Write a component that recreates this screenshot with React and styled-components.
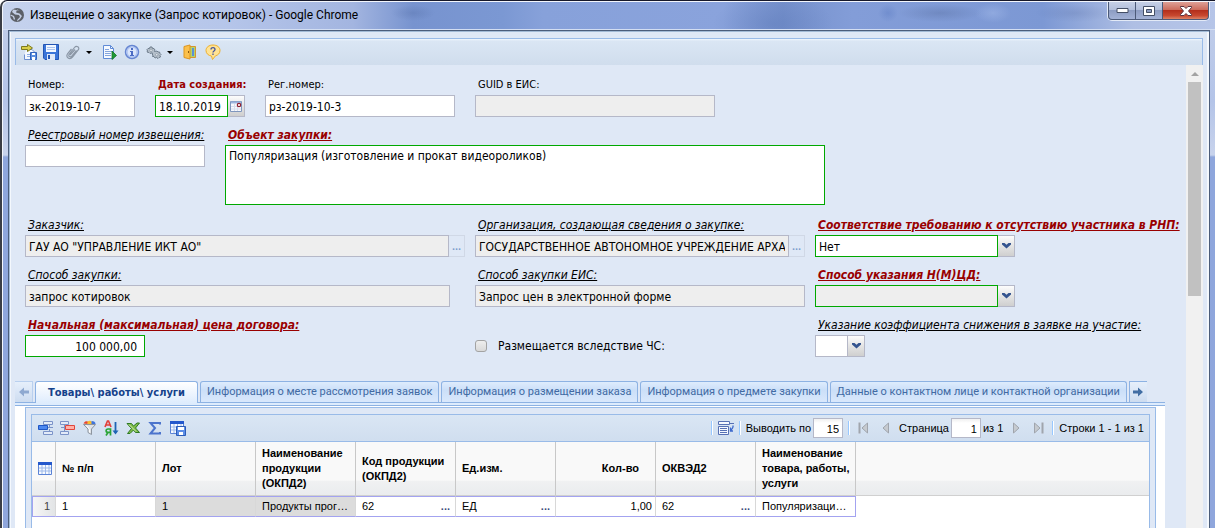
import React from 'react';
import styled, { createGlobalStyle, css } from 'styled-components';

const verdana = `'DejaVu Sans Condensed', Verdana, sans-serif`;
const arial = `'Liberation Sans', Arial, sans-serif`;
const segoe = `Roboto, 'Segoe UI', sans-serif`;

const tabs = [
  { id: 1, name: 'Товары\\ работы\\ услуги', active: true },
  { id: 2, name: 'Информация о месте рассмотрения заявок' },
  { id: 3, name: 'Информация о размещении заказа' },
  { id: 4, name: 'Информация о предмете закупки' },
  { id: 5, name: 'Данные о контактном лице и контактной организации' },
];

const columns = [
  { id: 'num', title: '№ п/п', value: '1' },
  { id: 'lot', title: 'Лот', value: '1', locked: true },
  {
    id: 'name',
    title: 'Наименование продукции (ОКПД2)',
    value: 'Продукты прог…',
    locked: true,
  },
  { id: 'code', title: 'Код продукции (ОКПД2)', value: '62', lookup: true },
  { id: 'unit', title: 'Ед.изм.', value: 'ЕД', lookup: true },
  { id: 'count', title: 'Кол-во', value: '1,00', right: true },
  { id: 'okved', title: 'ОКВЭД2', value: '62', lookup: true },
  {
    id: 'goods',
    title: 'Наименование товара, работы, услуги',
    value: 'Популяризаци…',
  },
];

/* ---------- icons ---------- */

const Svg = ({ w = 16, h = 16, children }) => (
  <svg width={w} height={h} viewBox={`0 0 ${w} ${h}`} fill='none' aria-hidden='true'>
    {children}
  </svg>
);

const GlobeIcon = () => (
  <Svg>
    <circle cx='8' cy='8' r='7' fill='#5c6067' />
    <path d='M4 2.500 3 5l3 2.500 4 .5 1 2-2.500 2.500-.5 2 3-2.500 2-3-2.500-2.500L7 5.500l1-3 3 1' fill='#c3cde2' />
    <path d='m1.500 8 3 1.500 1 3' stroke='#c3cde2' strokeWidth='1.300' />
  </Svg>
);

const SaveExitIcon = () => (
  <Svg>
    <path d='M5 5.500h6l3 3v7H3.500v-5' fill='#f4f8ff' stroke='#6b8fd0' />
    <path d='M6 12.500h3M6 10.500h3' stroke='#8fb0e6' />
    <path d='M9.500 8.500h6v7h-6z' fill='#5b8fe0' stroke='#2f62bd' />
    <path d='M11 9h3v2h-3zM11 13h3v3h-3z' fill='#fff' />
    <path d='M.5 2.500h6V.500l5 3.500-5 3.500v-2h-6z' fill='#d9cf4a' stroke='#7d7a1d' />
  </Svg>
);

const DiskIcon = () => (
  <Svg>
    <path d='M.5.500h15v15H2l-1.500-1.500z' fill='#3a74d8' stroke='#2355b4' />
    <path d='M3 1h10v7H3z' fill='#f2f7ff' />
    <path d='M4 3.500h8M4 5.500h8' stroke='#a9c4f0' />
    <path d='M4 10h8v6H4z' fill='#dfe8f8' />
    <path d='M5 11h2v4H5z' fill='#2355b4' />
  </Svg>
);

const ClipIcon = () => (
  <Svg>
    <path
      d='M5 11l5-5.500M11.500 6.500l-4.500 5.500c-1.800 2-4.300.2-2.700-1.800L9.500 3.500c2-2.600 5.700-.2 3.700 2.500L7.500 13c-2.800 3.300-7.300.3-4.800-3.500L6.500 5'
      stroke='#8b97a6'
      strokeWidth='1.200'
    />
  </Svg>
);

const DocPlayIcon = () => (
  <Svg>
    <path d='M1.500 1.500h7l3 3v10h-10z' fill='#f5f9ff' stroke='#5f8ad6' />
    <path d='M8.500 1.500v3h3' stroke='#5f8ad6' />
    <path d='M3 5.500h4M3 7.500h7M3 9.500h6M3 11.500h6' stroke='#84a5dd' />
    <path d='m10 7 4.500 4.500L10 15.500z' fill='#1f9a34' stroke='#117526' strokeWidth='.8' />
  </Svg>
);

const InfoIcon = () => (
  <Svg>
    <circle cx='8' cy='8' r='6.500' fill='#dbe6fb' stroke='#6686d2' strokeWidth='1.500' />
    <circle cx='8' cy='8' r='5' stroke='#a4bcf0' />
    <path d='M7 4h2v2H7zM6 7h3v4h1v1H6v-1h1V8H6z' fill='#4c6cc4' />
  </Svg>
);

const GearIcon = () => (
  <Svg>
    <path
      d='m1 5.500 1-1h1.500L4 3h2l.5 1.500H8L9 6l-.5 1.500h1L11 7l1 1h1.500l.5 1.500 1 1-1 1 .5 1.500-1.500.5-1 1-1.500-1-1.500.500-1-1.500H6.500L7 11 6 10l.5-1L5 9l-1 .500L3 8.500 1 8l.5-1z'
      fill='#b4bfca'
      stroke='#6e7d8c'
    />
    <circle cx='5' cy='6.300' r='1.200' fill='#f4f8fd' stroke='#6e7d8c' strokeWidth='.6' />
    <circle cx='10.800' cy='10.800' r='1.200' fill='#f4f8fd' stroke='#6e7d8c' strokeWidth='.6' />
  </Svg>
);

const DoorIcon = () => (
  <Svg>
    <path d='M6.500 2.500h6v11h-6z' fill='#b4d36b' stroke='#d59530' />
    <path d='M10 4v8' stroke='#5b91d8' strokeWidth='2' />
    <path d='m1 2.500 6-1.500v14l-6-1.500z' fill='#fbc04c' stroke='#dd951f' />
    <path d='M5.500 7v2' stroke='#8a5a10' />
  </Svg>
);

const HelpIcon = () => (
  <Svg>
    <path
      d='M8 1c4 0 7 2.200 7 5.500 0 2.800-2 4.700-4.500 5.300L7.500 15.500l-1-3.500C3.500 11.700 1 9.500 1 6.500 1 3.200 4 1 8 1z'
      fill='#ffe394'
      stroke='#eeb02c'
    />
    <path d='M6 5.500c0-2.500 4-2.500 4 0C10 7 8 7 8 8.500M8 9.500V11' stroke='#45549c' strokeWidth='1.300' />
  </Svg>
);

const CalendarIcon = () => (
  <Svg w={13} h={13}>
    <path d='M.5 1.500h11v10H.5z' fill='#f7f9fd' stroke='#7f96bd' />
    <path d='M1 2.500h10' stroke='#9bb4dd' strokeWidth='2' />
    <path d='M4.500 4v7M7.500 4v7M1 6.500h10M1 9h10' stroke='#d6deec' />
    <circle cx='9' cy='5' r='1.700' fill='#fff' stroke='#902030' strokeWidth='1.200' />
  </Svg>
);

const ChevronIcon = () => (
  <Svg w={9} h={6}>
    <path d='M0 0h2.500l2 1.700L6.500 0H9v1.500L4.500 5.500 0 1.500z' fill='#34548f' />
  </Svg>
);

const ScrollArrowIcon = ({ left }) => (
  <Svg w={10} h={10}>
    <path
      d={left ? 'M0 5 5 .500V3.500h5v3H5v3z' : 'm10 5-5-4.500V3.500H0v3h5v3z'}
      fill={left ? '#8fa9d0' : '#416da3'}
    />
  </Svg>
);

const RowInsertIcon = () => (
  <Svg>
    <path d='M5.500 1.500h9v3h-9zM5.500 11.500h9v3h-9z' fill='#e3ebf8' stroke='#7b93c8' />
    <path d='M11.500 5v2M11.500 9v3' stroke='#7b93c8' />
    <path d='M.5 5.500h9v4h-9z' fill='#4b87f0' stroke='#1f56c4' />
    <path d='M10 7.500h5' stroke='#7b93c8' />
  </Svg>
);

const RowRemoveIcon = () => (
  <Svg>
    <path d='M.5 1.500h8v3h-8zM.5 11.500h8v3h-8z' fill='#e3ebf8' stroke='#7b93c8' />
    <path d='M4.500 5v6M1 7.500h4' stroke='#7b93c8' />
    <path d='M5.500 5.500h9v4h-9z' fill='#ffb0a8' stroke='#e0463c' />
  </Svg>
);

const FilterIcon = () => (
  <Svg>
    <path d='M1.500 4.500h12L9.500 9v5.500L6 12.500V9z' fill='#dfe3e8' stroke='#8d959f' />
    <path d='M1.500 3.500c1.500-3 4-2.500 5-1.500L5.500 4z' fill='#e8482f' />
    <path d='M5.500 1.500c3-1.500 4.500-.500 4.500 2.500H5.500z' fill='#f7bd2e' />
    <path d='M9.500 1c2.500 0 4 1 4 3h-4z' fill='#3f74dc' />
    <path d='m4.500 5.500 3 4v3' stroke='#fff' />
  </Svg>
);

const SortIcon = () => (
  <Svg>
    <path d='m1 7 2.500-6h1L7 7M2 5h4' stroke='#e2403a' strokeWidth='1.700' />
    <path d='M6.500 15.500V9H4C1.500 9 1.500 12.300 4 12.300h2.500M4 12.500l-2 3' stroke='#2ba437' strokeWidth='1.700' />
    <path d='M11.500 2v11' stroke='#2064b4' strokeWidth='1.800' />
    <path d='M8.500 10.500h6l-3 4z' fill='#2064b4' />
  </Svg>
);

const ExcelIcon = () => (
  <Svg>
    <path
      d='M1 3.500h4.500l2 2.500L11 3h2.500L9.500 8l4 4.500h-4l-2-2.500L4 13.500H1.500L5.500 8.500z'
      fill='#7fbb48'
      stroke='#2f7a24'
    />
    <path d='m3 4.500 7 7' stroke='#d3ecb4' />
  </Svg>
);

const SigmaIcon = () => (
  <Svg>
    <path d='M12 4.500V3H2.500L7 8l-4.500 5.500H12V12' stroke='#4c74cc' strokeWidth='2' />
  </Svg>
);

const TableIcon = ({ disk }) => (
  <Svg>
    <path d='M.5 1.500h13v12H.5z' fill='#f7faff' stroke='#5b83d6' />
    <path d='M0 1h14v3H0z' fill='#2458cc' />
    <path d='M4 4v9M7.500 4v9M11 4v9M1 7h12M1 10h12' stroke='#9db9ea' />
    {disk && (
      <>
        <path d='M6.500 6.500h9v9h-9z' fill='#5c8de6' stroke='#2c5cb8' />
        <path d='M8 7h6v3H8zM9 12h4v3H9z' fill='#fff' />
      </>
    )}
  </Svg>
);

const RowsIcon = () => (
  <Svg>
    <path d='M.5 1.500h11v3H.5zM.5 6.500h10v8H.5z' fill='#f4f8ff' stroke='#5670b4' />
    <path d='M12 3.500h4M2 8.500h7M2 10.500h7M2 12.500h7' stroke='#5670b4' />
    <path d='M15 5.500c.500 3-1 3.500-2.500 5m0-3v3.500H15' stroke='#3c68cc' strokeWidth='1.300' />
  </Svg>
);

const PagerIcon = ({ end, next }) => (
  <Svg w={12} h={12}>
    <g transform={next ? 'translate(12 0) scale(-1 1)' : undefined}>
      {end && <path d='M1.500.500v11' stroke='#a0a5ad' strokeWidth='2' />}
      <path d='M9.500 1v10L4 6z' fill='#c6cacf' stroke='#a0a5ad' />
    </g>
  </Svg>
);

/* ---------- styles ---------- */

const GlobalStyle = createGlobalStyle`
  * {
    box-sizing: border-box;
  }
  body {
    margin: 0;
    font-family: ${verdana};
    font-size: 11px;
    color: #000;
    overflow: hidden;
  }
  button, input, select, textarea {
    font: inherit;
    color: inherit;
    margin: 0;
    border-radius: 0;
    outline: none;
  }
  svg {
    display: block;
    flex: none;
  }
`;

const Window = styled.div`
  height: 100vh;
  display: flex;
  flex-direction: column;
  padding-right: 5px;
  border-top: 1px solid #16182a;
  border-left: 2px solid #3a3d45;
  border-top-left-radius: 7px;
  background: linear-gradient(
    #c3cfea 0,
    #b4c4e8 100px,
    #c8d3ec 154px,
    #8ea6dc 156px,
    #8fa6dc 100%
  );
  box-shadow: inset 1px 1px 0 #f3f6fc;
`;

const TitleBar = styled.header`
  flex: none;
  height: 28px;
  margin: 1px -5px 0 1px;
  padding: 0 5px 0 6px;
  display: flex;
  align-items: flex-start;
  gap: 5px;
  border-bottom: 1px solid #d3def2;
  border-top-left-radius: 6px;
  background:
    radial-gradient(22px 8px at 410px 11px, rgba(70, 95, 150, 0.25), transparent),
    radial-gradient(60px 30px at 770px 22px, rgba(85, 115, 180, 0.35), transparent),
    radial-gradient(10px 9px at 885px 11px, rgba(65, 100, 180, 0.25), transparent),
    radial-gradient(42px 9px at 937px 11px, rgba(65, 85, 130, 0.25), transparent),
    radial-gradient(18px 10px at 990px 11px, rgba(185, 205, 245, 0.3), transparent),
    radial-gradient(40px 9px at 1072px 11px, rgba(75, 95, 150, 0.2), transparent),
    linear-gradient(
      90deg,
      #c5d2ed 0,
      #b6c6ea 220px,
      #a3b5e0 350px,
      #7793cf 410px,
      #7b98d3 500px,
      #87a1da 540px,
      #8aa3dc 720px,
      #7691cc 780px,
      #839dd8 850px,
      #7c98d4 1040px,
      #afbfe4 1130px,
      #b6c5e8 100%
    );
`;

const Title = styled.h1`
  flex: 1;
  margin: 0;
  font: 12px/26px ${segoe};
  white-space: nowrap;
`;

const TitleIcon = styled.span`
  padding-top: 5px;
`;

const WindowButtons = styled.div`
  display: flex;
  border: 1px solid #e3eaf7;
  border-top: 0;
  border-radius: 0 0 5px 5px;
`;

const WindowButton = styled.button`
  width: ${({ $close }) => ($close ? '46px' : '27px')};
  height: 18px;
  padding: 0;
  display: flex;
  align-items: center;
  justify-content: center;
  border: 1px solid #4c5a78;
  border-top: 0;
  border-left-width: 0;
  background: ${({ $close }) =>
    $close
      ? 'linear-gradient(#dea096 0, #cd6d5d 45%, #b42f1c 50%, #c8482f 80%, #dd8367)'
      : 'linear-gradient(#c6d0e6 0, #b3bfdb 45%, #8d9dc3 50%, #a3b2d6)'};
  &:first-child {
    width: 28px;
    border-left-width: 1px;
    border-bottom-left-radius: 4px;
  }
  &:last-child {
    border-bottom-right-radius: 4px;
  }
`;

const Frame = styled.main`
  flex: 1;
  min-height: 0;
  margin-left: 6px;
  padding: 7px 6px 0;
  display: flex;
  flex-direction: column;
  border: 1px solid #4b5d7b;
  border-bottom: 0;
  background: #dfe8f6;
  box-shadow: inset 1px 1px 0 #a3bbd6, inset -2px 0 0 #f4f8fd, inset 2px 0 0 #f4f8fd;
`;

const Toolbar = styled.div`
  flex: none;
  height: 27px;
  padding: 0 5px;
  display: flex;
  align-items: center;
  gap: 6px;
  border: 1px solid #99bbe8;
  border-bottom: 0;
  background: linear-gradient(#f2f7fd 0, #dae6f4 2px, #d0dded);
`;

const ToolButton = styled.button`
  padding: 0;
  display: flex;
  align-items: center;
  gap: 5px;
  border: 0;
  background: none;
`;

const Caret = styled.span`
  margin-right: 4px;
  border: 3px solid transparent;
  border-top-color: #000;
  border-bottom: 0;
`;

const Scroller = styled.div`
  flex: 1;
  min-height: 0;
  display: flex;
`;

const Content = styled.div`
  flex: 1;
  min-width: 0;
  display: flex;
  flex-direction: column;
`;

const ScrollBar = styled.div`
  flex: none;
  width: 17px;
  padding: 7px 2px 0;
  display: flex;
  flex-direction: column;
  align-items: center;
  gap: 6px;
  background: #f1f1f1;
  &::before {
    content: '';
    border: 4px solid transparent;
    border-top: 0;
    border-bottom-color: #a3a3a3;
  }
  &::after {
    content: '';
    width: 13px;
    height: 214px;
    background: #c1c1c1;
  }
`;

const Form = styled.form`
  flex: none;
  padding: 10px 10px 16px;
`;

const Row = styled.div`
  display: flex;
  align-items: flex-start;
  gap: 20px;
  margin-bottom: ${({ $gap }) => $gap || 8}px;
`;

const GridRow = styled.div`
  display: grid;
  grid-template-columns: 440px 330px 1fr;
  column-gap: 10px;
  margin-bottom: 8px;
`;

const FieldBox = styled.div`
  width: ${({ $w }) => ($w ? `${$w}px` : 'auto')};
`;

const Label = styled.label`
  display: block;
  padding: 1px 0 1px 3px;
  font: 12px/18px ${verdana};
  white-space: nowrap;
  ${({ $plain }) =>
    $plain
      ? css`
          font-size: 11px;
        `
      : css`
          font-style: italic;
          text-decoration: underline;
        `}
  ${({ $required }) =>
    $required &&
    css`
      color: #990000;
      font-weight: bold;
    `}
`;

const control = css`
  display: block;
  width: 100%;
  min-width: 0;
  height: 22px;
  padding: 2px 3px 0;
  border: 1px solid ${({ $required }) => ($required ? '#00a800' : '#b5b8c8')};
  background: ${({ $disabled }) => ($disabled ? '#eeeeee' : '#fff')};
  font: 12px ${verdana};
`;

const Input = styled.input`
  ${control}
  text-align: ${({ $right }) => ($right ? 'right' : 'left')};
  padding-right: ${({ $right }) => ($right ? 7 : 3)}px;
`;

const Area = styled.textarea`
  ${control}
  height: 60px;
  padding-top: 3px;
  resize: none;
`;

const Select = styled.select`
  ${control}
  appearance: none;
`;

const Combo = styled.div`
  display: flex;
  width: ${({ $w }) => ($w ? `${$w}px` : 'auto')};
`;

const Trigger = styled.button`
  flex: none;
  width: 17px;
  height: 22px;
  padding: 0;
  display: flex;
  align-items: center;
  justify-content: center;
  border: 1px solid #b5b8c8;
  border-left: 0;
  background: linear-gradient(#fdfdfd, #e4e4e4 50%, #cfcfcf);
`;

const MoreButton = styled.button`
  flex: none;
  width: 16px;
  height: 22px;
  padding: 0;
  border: 1px solid #d0d8e6;
  border-left: 0;
  background: #dfe8f6;
  color: #7f9fce;
  font: bold 11px ${arial};
`;

const CheckLine = styled.label`
  display: flex;
  align-items: center;
  gap: 11px;
  padding-top: 20px;
  font: 12px/20px ${verdana};
`;

const Check = styled.input`
  appearance: none;
  width: 12px;
  height: 12px;
  border: 1px solid #a3a3a3;
  border-radius: 3px;
  background: linear-gradient(#eeeeee, #d9d9d9);
`;

const TabStrip = styled.div`
  flex: none;
  display: flex;
  width: calc(100% - 21px);
  height: 25px;
  gap: 2px;
  border-bottom: 1px solid #8db2e3;
  box-shadow: inset 0 -2px 0 #deecfd, inset 0 -3px 0 #8db2e3;
`;

const Tab = styled.button`
  flex: none;
  height: ${({ $active }) => ($active ? 22 : 21)}px;
  min-width: 163px;
  padding: 0 6px;
  border: 1px solid #8db2e3;
  border-bottom: 0;
  border-radius: 3px 3px 0 0;
  font: ${({ $active }) => ($active ? `bold 11px/20px ${verdana}` : `11px/20px ${segoe}`)};
  color: ${({ $active }) => ($active ? '#15428b' : '#416aa3')};
  background: ${({ $active }) =>
    $active ? 'linear-gradient(#fff, #deecfd)' : 'linear-gradient(#deecfd, #cbdff8 40%, #d9e8fc)'};
  white-space: nowrap;
`;

const TabScroll = styled.button`
  flex: none;
  width: 18px;
  height: 21px;
  padding: 0;
  display: flex;
  align-items: center;
  justify-content: center;
  border: 1px solid ${({ $left }) => ($left ? '#b9d0ef' : '#8db2e3')};
  border-bottom: 0;
  border-${({ $left }) => ($left ? 'left' : 'right')}: 0;
  background: linear-gradient(#e6effb, #cddcf0);
`;

const TabBody = styled.div`
  flex: 1;
  min-height: 0;
  margin-right: 21px;
  padding: 1px 9px 0 10px;
  display: flex;
  background: #fff;
`;

const GridPanel = styled.section`
  flex: 1;
  min-width: 0;
  padding: 6px 5px 0;
  display: flex;
  border: 1px solid #99bbe8;
  border-bottom: 0;
  background: #dfe8f6;
`;

const Grid = styled.div`
  flex: 1;
  min-width: 0;
  border: 1px solid #99bbe8;
  border-bottom: 0;
  background: #fff;
`;

const GridToolbar = styled.div`
  height: 27px;
  padding: 0 5px 0 6px;
  display: flex;
  align-items: center;
  justify-content: space-between;
  border-bottom: 1px solid #99bbe8;
  background: linear-gradient(#dae6f4, #d0deef);
`;

const Tools = styled.div`
  display: flex;
  align-items: center;
  gap: 6px;
`;

const Pager = styled.div`
  display: flex;
  align-items: center;
  gap: ${({ $gap }) => $gap || 2}px;
  font: 11px ${arial};
  white-space: nowrap;
`;

const PagerNav = styled.div`
  display: flex;
  align-items: center;
  gap: 9px;
  padding: 0 3px;
`;

const Separator = styled.span`
  width: 2px;
  height: 14px;
  border-left: 1px solid #98c8ff;
  border-right: 1px solid #fff;
`;

const PageInput = styled.input`
  width: 30px;
  height: 20px;
  padding: 2px 3px 0;
  border: 1px solid #b5b8c8;
  background: linear-gradient(#f0f0f0, #fff 4px);
  font: 11px ${arial};
  text-align: right;
`;

const Table = styled.table`
  width: 100%;
  table-layout: fixed;
  border-collapse: separate;
  border-spacing: 0;
  font: 11px/15px ${arial};
`;

const Th = styled.th`
  height: 54px;
  padding: 0 4px 0 6px;
  width: ${({ $w }) => $w || 'auto'};
  border-bottom: 1px solid #d0d0d0;
  border-right: ${({ $last }) => ($last ? 0 : '1px solid #c8c8c8')};
  background: linear-gradient(#f9f9f9 0, #f9f9f9 72%, #f0f1f2 74%, #eaecee);
  font-weight: bold;
  text-align: ${({ $right }) => ($right ? 'right' : 'left')};
  padding-right: ${({ $right }) => ($right ? 16 : 4)}px;
`;

const Td = styled.td`
  height: 21px;
  padding: 0 6px;
  padding-right: ${({ $right }) => ($right ? 3 : 5)}px;
  border: 0 solid #a3a3f0;
  border-width: ${({ $last }) => ($last ? '0' : '1px 0')};
  border-right: ${({ $last }) => ($last ? 0 : '1px solid #d8d8d8')};
  background: ${({ $locked }) => ($locked ? '#dcdcdc' : '#fff')};
  white-space: nowrap;
  text-align: ${({ $right }) => ($right ? 'right' : 'left')};
  &:first-child {
    border-left: 1px solid #a3a3f0;
    background: linear-gradient(90deg, #f6f6f6, #e2e4e6);
    text-align: right;
    color: #444;
  }
  &:nth-last-child(2) {
    border-right-color: #a3a3f0;
  }
`;

const LookupCell = styled.span`
  display: flex;
  justify-content: space-between;
  b {
    color: #3c4f7c;
  }
`;

/* ---------- parts ---------- */

const Field = ({ id, label, w, plain, required, children, ...rest }) => (
  <FieldBox $w={w}>
    <Label htmlFor={id} $plain={plain} $required={required}>
      {label}
    </Label>
    {children || <Input id={id} $required={required} {...rest} />}
  </FieldBox>
);

const Lookup = ({ id, w, value }) => (
  <Combo $w={w}>
    <Input id={id} defaultValue={value} $disabled readOnly />
    <MoreButton type='button' aria-label='Выбрать'>
      ...
    </MoreButton>
  </Combo>
);

const DropDown = ({ id, w, value, ...rest }) => (
  <Combo $w={w}>
    <Select id={id} defaultValue={value} {...rest}>
      <option>{value}</option>
    </Select>
    <Trigger type='button' aria-label='Открыть список'>
      <ChevronIcon />
    </Trigger>
  </Combo>
);

function TitleRow() {
  return (
    <TitleBar>
      <TitleIcon>
        <GlobeIcon />
      </TitleIcon>
      <Title>Извещение о закупке (Запрос котировок) - Google Chrome</Title>
      <WindowButtons>
        <WindowButton aria-label='Свернуть'>
          <Svg w={13} h={6}>
            <path d='M1 .500h11v4H1z' fill='#fff' stroke='#444f66' />
          </Svg>
        </WindowButton>
        <WindowButton aria-label='Развернуть'>
          <Svg w={12} h={10}>
            <path d='M.5.500h11v9H.5z' fill='#fff' stroke='#444f66' />
            <path d='M3.500 3.500h5v3h-5z' fill='#8d9dc3' stroke='#444f66' />
          </Svg>
        </WindowButton>
        <WindowButton $close aria-label='Закрыть'>
          <Svg w={12} h={10}>
            <path
              d='M.5.500h3.500L6 2.500 8 .500h3.500v1L8.500 5l3 3.500v1H8l-2-2-2 2H.5v-1l3-3.500-3-3.500z'
              fill='#fff'
              stroke='#5a3440'
            />
          </Svg>
        </WindowButton>
      </WindowButtons>
    </TitleBar>
  );
}

function MainToolbar() {
  return (
    <Toolbar>
      <ToolButton aria-label='Сохранить и закрыть'>
        <SaveExitIcon />
      </ToolButton>
      <ToolButton aria-label='Сохранить'>
        <DiskIcon />
      </ToolButton>
      <ToolButton aria-label='Вложения'>
        <ClipIcon />
        <Caret />
      </ToolButton>
      <ToolButton aria-label='Выполнить'>
        <DocPlayIcon />
      </ToolButton>
      <ToolButton aria-label='Информация'>
        <InfoIcon />
      </ToolButton>
      <ToolButton aria-label='Настройки'>
        <GearIcon />
        <Caret />
      </ToolButton>
      <ToolButton aria-label='Выход'>
        <DoorIcon />
      </ToolButton>
      <ToolButton aria-label='Справка'>
        <HelpIcon />
      </ToolButton>
    </Toolbar>
  );
}

function NoticeForm() {
  return (
    <Form>
      <Row>
        <Field id='number' label='Номер:' w={110} plain defaultValue='зк-2019-10-7' />
        <Field id='created' label='Дата создания:' w={90} plain required>
          <Combo>
            <Input id='created' defaultValue='18.10.2019' $required />
            <Trigger type='button' aria-label='Календарь'>
              <CalendarIcon />
            </Trigger>
          </Combo>
        </Field>
        <Field id='regnum' label='Рег.номер:' w={190} plain defaultValue='рз-2019-10-3' />
        <Field id='guid' label='GUID в ЕИС:' w={240} plain $disabled readOnly />
      </Row>
      <Row $gap={10}>
        <Field id='registry' label='Реестровый номер извещения:' w={180} />
        <Field id='subject' label='Объект закупки:' w={600} required>
          <Area
            id='subject'
            $required
            defaultValue='Популяризация (изготовление и прокат видеороликов)'
          />
        </Field>
      </Row>
      <GridRow>
        <Field id='customer' label='Заказчик:'>
          <Lookup id='customer' w={440} value='ГАУ АО "УПРАВЛЕНИЕ ИКТ АО"' />
        </Field>
        <Field id='org' label='Организация, создающая сведения о закупке:'>
          <Lookup
            id='org'
            value='ГОСУДАРСТВЕННОЕ АВТОНОМНОЕ УЧРЕЖДЕНИЕ АРХАНГЕЛЬСКОЙ ОБЛАСТИ'
          />
        </Field>
        <Field id='rnp' label='Соответствие требованию к отсутствию участника в РНП:' required>
          <DropDown id='rnp' w={200} value='Нет' $required />
        </Field>
      </GridRow>
      <GridRow>
        <Field
          id='method'
          label='Способ закупки:'
          w={425}
          defaultValue='запрос котировок'
          $disabled
          readOnly
        />
        <Field
          id='methodEis'
          label='Способ закупки ЕИС:'
          defaultValue='Запрос цен в электронной форме'
          $disabled
          readOnly
        />
        <Field id='priceMethod' label='Способ указания Н(М)ЦД:' required>
          <DropDown id='priceMethod' w={200} value='' $required $disabled />
        </Field>
      </GridRow>
      <GridRow>
        <Field id='price' label='Начальная (максимальная) цена договора:' w={120} required>
          <Input id='price' defaultValue='100 000,00' $required $right />
        </Field>
        <CheckLine>
          <Check type='checkbox' />
          Размещается вследствие ЧС:
        </CheckLine>
        <Field id='ratio' label='Указание коэффициента снижения в заявке на участие:'>
          <DropDown id='ratio' w={50} value='' />
        </Field>
      </GridRow>
    </Form>
  );
}

function ItemsGrid() {
  return (
    <Grid>
      <GridToolbar>
        <Tools>
          <ToolButton aria-label='Добавить строку'>
            <RowInsertIcon />
          </ToolButton>
          <ToolButton aria-label='Удалить строку'>
            <RowRemoveIcon />
          </ToolButton>
          <ToolButton aria-label='Фильтр'>
            <FilterIcon />
          </ToolButton>
          <ToolButton aria-label='Сортировка'>
            <SortIcon />
          </ToolButton>
          <ToolButton aria-label='Экспорт в Excel'>
            <ExcelIcon />
          </ToolButton>
          <ToolButton aria-label='Итоги'>
            <SigmaIcon />
          </ToolButton>
          <ToolButton aria-label='Сохранить вид'>
            <TableIcon disk />
          </ToolButton>
        </Tools>
        <Pager $gap={5}>
          <Separator />
          <ToolButton aria-label='Строки на странице'>
            <RowsIcon />
          </ToolButton>
          <Separator />
          <Pager as='label'>
            Выводить по
            <PageInput defaultValue='15' />
          </Pager>
          <Separator />
          <PagerNav>
            <ToolButton aria-label='Первая'>
              <PagerIcon end />
            </ToolButton>
            <ToolButton aria-label='Предыдущая'>
              <PagerIcon />
            </ToolButton>
          </PagerNav>
          <Pager as='label'>
            Страница
            <PageInput defaultValue='1' />
            из 1
          </Pager>
          <PagerNav>
            <ToolButton aria-label='Следующая'>
              <PagerIcon next />
            </ToolButton>
            <ToolButton aria-label='Последняя'>
              <PagerIcon end next />
            </ToolButton>
          </PagerNav>
          <Separator />
          <span>Строки 1 - 1 из 1</span>
        </Pager>
      </GridToolbar>
      <Table>
        <thead>
          <tr>
            <Th $w='24px' aria-label='Столбцы'>
              <TableIcon />
            </Th>
            {columns.map((col) => (
              <Th key={col.id} $w='100px' $right={col.right}>
                {col.title}
              </Th>
            ))}
            <Th $last />
          </tr>
        </thead>
        <tbody>
          <tr>
            <Td>1</Td>
            {columns.map((col) => (
              <Td key={col.id} $locked={col.locked} $right={col.right}>
                {col.lookup ? (
                  <LookupCell>
                    {col.value}
                    <b>...</b>
                  </LookupCell>
                ) : (
                  col.value
                )}
              </Td>
            ))}
            <Td $last />
          </tr>
        </tbody>
      </Table>
    </Grid>
  );
}

function App() {
  return (
    <>
      <GlobalStyle />
      <Window>
        <TitleRow />
        <Frame>
          <MainToolbar />
          <Scroller>
            <Content>
              <NoticeForm />
              <TabStrip>
                <TabScroll $left aria-label='Назад'>
                  <ScrollArrowIcon left />
                </TabScroll>
                {tabs.map((tab) => (
                  <Tab key={tab.id} $active={tab.active}>
                    {tab.name}
                  </Tab>
                ))}
                <TabScroll aria-label='Вперёд'>
                  <ScrollArrowIcon />
                </TabScroll>
              </TabStrip>
              <TabBody>
                <GridPanel>
                  <ItemsGrid />
                </GridPanel>
              </TabBody>
            </Content>
            <ScrollBar />
          </Scroller>
        </Frame>
      </Window>
    </>
  );
}

export default App;
